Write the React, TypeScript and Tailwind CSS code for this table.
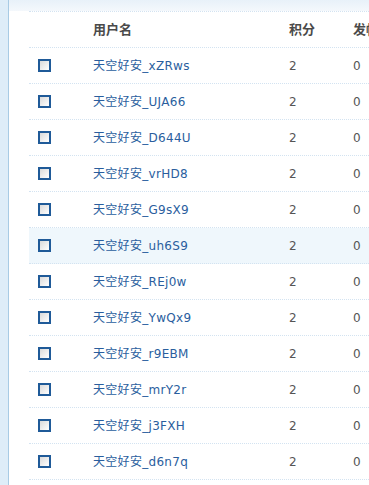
import React from "react";

const users = [
  "xZRws",
  "UJA66",
  "D644U",
  "vrHD8",
  "G9sX9",
  "uh6S9",
  "REj0w",
  "YwQx9",
  "r9EBM",
  "mrY2r",
  "j3FXH",
  "d6n7q",
];

const font = { fontFamily: '"DejaVu Sans", "Noto Sans CJK SC", sans-serif' };

function Checkbox() {
  return (
    <span className="block h-[13px] w-[13px] border-2 border-[#1f5a98] bg-gradient-to-br from-[#dadada] to-white" />
  );
}

export default function App() {
  return (
    <div
      className="flex h-[485px] w-[369px] overflow-hidden bg-white text-[12px]"
      style={font}
    >
      <div className="w-[9px] shrink-0 border-r border-[#a8cbe4] bg-[#deedf8]" />
      <div className="flex-1">
        <div className="h-[11px] bg-gradient-to-b from-[#e8f1f9] to-[#f4f8fc]" />
        <div className="ml-[20px]">
          <div className="grid h-[37px] grid-cols-[64px_196px_64px_1fr] items-center whitespace-nowrap border-y border-dotted border-[#d3e3f1] text-[13px] font-bold text-[#4a4a4a]">
            <span />
            <span>用户名</span>
            <span>积分</span>
            <span>发帖</span>
          </div>
          {users.map((u, i) => (
            <div
              key={u}
              className={
                "grid h-[36px] grid-cols-[64px_196px_64px_1fr] items-center whitespace-nowrap border-b border-dotted border-[#d3e3f1] " +
                (i === 5 ? "bg-[#eff7fc]" : "")
              }
            >
              <span className="pl-[9px]">
                <Checkbox />
              </span>
              <span className="tracking-[0.3px] text-[#2a5e9e]">天空好安_{u}</span>
              <span className="text-[#555]">2</span>
              <span className="text-[#555]">0</span>
            </div>
          ))}
        </div>
      </div>
    </div>
  );
}
